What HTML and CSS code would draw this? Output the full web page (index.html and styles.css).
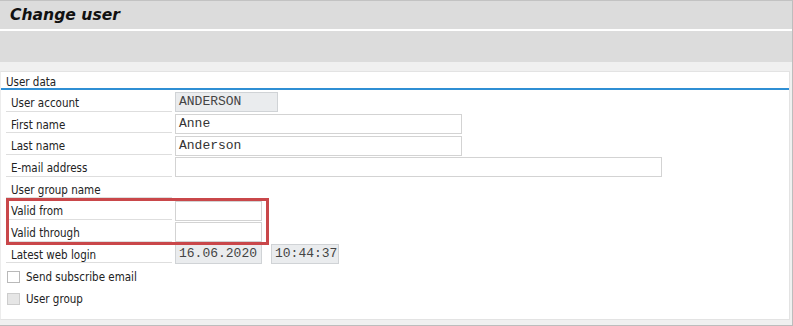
FILE: index.html
```html
<!DOCTYPE html>
<html>
<head>
<meta charset="utf-8">
<link rel="stylesheet" href="styles.css">
</head>
<body>
<div class="app">
  <div class="titlebar"><h1 class="title">Change user</h1></div>
  <div class="toolbar"></div>
  <div class="content">
    <div class="panel">
      <div class="panel-head">User data</div>
      <div class="form">
        <div class="row">
          <div class="label">User account</div>
          <div class="box readonly w-account">ANDERSON</div>
        </div>
        <div class="row">
          <div class="label">First name</div>
          <div class="box w-name">Anne</div>
        </div>
        <div class="row">
          <div class="label">Last name</div>
          <div class="box w-name">Anderson</div>
        </div>
        <div class="row">
          <div class="label">E-mail address</div>
          <div class="box w-mail"></div>
        </div>
        <div class="row">
          <div class="label">User group name</div>
        </div>
        <div class="row">
          <div class="label">Valid from</div>
          <div class="box w-date"></div>
        </div>
        <div class="row">
          <div class="label">Valid through</div>
          <div class="box w-date"></div>
        </div>
        <div class="row">
          <div class="label">Latest web login</div>
          <div class="box readonly w-date">16.06.2020</div>
          <div class="box readonly w-time">10:44:37</div>
        </div>
        <div class="checks">
          <div class="check-row">
            <span class="checkbox"></span>
            <span class="check-label">Send subscribe email</span>
          </div>
          <div class="check-row">
            <span class="checkbox disabled"></span>
            <span class="check-label">User group</span>
          </div>
        </div>
        <div class="highlight"></div>
      </div>
    </div>
  </div>
</div>
</body>
</html>
```

FILE: styles.css
```css
* { box-sizing: border-box; }
html, body { margin: 0; padding: 0; background: #ffffff; }
.app {
  width: 793px;
  height: 326px;
  border-top: 1px solid #c2c2c2;
  border-right: 1px solid #bdbdbd;
  border-bottom: 1px solid #bdbdbd;
  background: #f0f0f0;
  display: flex;
  flex-direction: column;
  font-family: "DejaVu Sans Condensed", "DejaVu Sans", sans-serif;
  font-stretch: condensed;
  font-size: 11.5px;
  color: #222;
}
.titlebar {
  height: 30px;
  background: #dcdcdc;
  border-bottom: 2px solid #ffffff;
  padding-left: 10px;
  flex: none;
}
.title {
  margin: 0;
  font-family: "DejaVu Sans", sans-serif;
  font-stretch: normal;
  font-size: 15.6px;
  font-weight: bold;
  font-style: italic;
  line-height: 28px;
  color: #111;
}
.toolbar {
  height: 31px;
  background: #dcdcdc;
  flex: none;
}
.content {
  flex: 1;
  padding: 9px 2px 5px 0;
  display: flex;
}
.panel {
  flex: 1;
  background: #ffffff;
  border: 1px solid #e3e3e3;
  border-left-color: #ececec;
}
.panel-head {
  height: 18px;
  padding-left: 5px;
  padding-top: 3px;
  line-height: 14px;
  border-bottom: 2px solid #2f8fd4;
  color: #222;
}
.form {
  position: relative;
  padding-left: 5px;
}
.row {
  height: 21.66px;
  display: flex;
  align-items: flex-start;
}
.label {
  width: 166px;
  height: 100%;
  border-bottom: 1px solid #dedede;
  padding-left: 5px;
  padding-top: 6px;
  line-height: 14px;
  margin-right: 3px;
  flex: none;
}
.box {
  height: 20px;
  margin-top: 2.3px;
  border: 1px solid #d3d3d3;
  background: #ffffff;
  font-family: "Liberation Mono", monospace;
  font-stretch: normal;
  font-size: 13px;
  line-height: 18px;
  padding-left: 3px;
  color: #333;
  flex: none;
}
.readonly {
  background: #eaecee;
  border-color: #d0d3d6;
  color: #444;
}
.w-account { width: 103px; }
.w-name { width: 287px; }
.w-mail { width: 487px; }
.w-date { width: 87px; }
.w-time { width: 68px; margin-left: 9px; }
.checks {
  padding-top: 2.3px;
}
.check-row {
  height: 22px;
  display: flex;
  align-items: center;
  padding-left: 1px;
}
.checkbox {
  width: 13px;
  height: 12px;
  border: 1px solid #b9b9b9;
  background: #ffffff;
  margin-right: 6px;
  flex: none;
}
.checkbox.disabled {
  background: #e6e6e6;
  border-color: #cdcdcd;
}
.check-label {
  line-height: 14px;
}
.highlight {
  position: absolute;
  left: 5px;
  top: 107.8px;
  width: 263px;
  height: 47.3px;
  border: 3px solid #c9474a;
  pointer-events: none;
}
```
